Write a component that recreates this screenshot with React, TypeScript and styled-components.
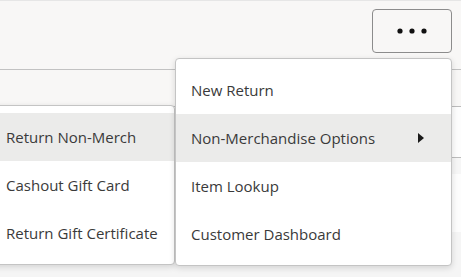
import React from "react";
import styled, { createGlobalStyle } from "styled-components";

const Global = createGlobalStyle`
  html, body { margin: 0; padding: 0; background: #fff; }
  body { font-family: "Open Sans", "Noto Sans", sans-serif; overflow: hidden; }
`;

const Page = styled.div`
  position: relative;
  width: 461px;
  height: 277px;
  overflow: hidden;
  background: #fff;
`;

const Header = styled.header`
  box-sizing: border-box;
  height: 70px;
  border-top: 1px solid #e6e6e6;
  border-bottom: 1px solid #c2c2c2;
  background: #f8f7f6;
  display: flex;
  justify-content: flex-end;
  align-items: flex-start;
  padding: 8px 9px 0 0;
`;

const MoreButton = styled.button`
  box-sizing: border-box;
  width: 80px;
  height: 44px;
  border: 1px solid #8c8c8c;
  border-radius: 4px;
  background: #f8f7f6;
  display: flex;
  align-items: center;
  justify-content: center;
  padding: 0;
  cursor: pointer;
`;

const Band = styled.div<{ $h: number; $bg: string; $line?: boolean }>`
  box-sizing: border-box;
  height: ${(p) => p.$h}px;
  background: ${(p) => p.$bg};
  border-bottom: ${(p) => (p.$line ? "1px solid #bcbcbc" : "none")};
`;

const Menu = styled.ul<{ $left: number; $top: number; $width: number; $z: number }>`
  position: absolute;
  left: ${(p) => p.$left}px;
  top: ${(p) => p.$top}px;
  width: ${(p) => p.$width}px;
  z-index: ${(p) => p.$z};
  box-sizing: border-box;
  margin: 0;
  padding: 7px 0;
  list-style: none;
  background: #fff;
  border: 1px solid #c4c4c4;
  border-radius: 4px;
  box-shadow: 0 2px 6px rgba(0, 0, 0, 0.14);
`;

const Item = styled.li<{ $active?: boolean }>`
  height: 48px;
  display: flex;
  align-items: center;
  justify-content: space-between;
  padding: 0 27px 0 15px;
  background: ${(p) => (p.$active ? "#ebebea" : "transparent")};
  color: #3a3a3a;
  font-size: 15px;
  white-space: nowrap;
`;

const Dots = () => (
  <svg width="32" height="8" viewBox="0 0 32 8">
    <circle cx="4" cy="4" r="2.6" fill="#111" />
    <circle cx="16" cy="4" r="2.6" fill="#111" />
    <circle cx="28" cy="4" r="2.6" fill="#111" />
  </svg>
);

const Caret = () => (
  <svg width="6" height="10" viewBox="0 0 6 10">
    <path d="M0 0 L6 5 L0 10 Z" fill="#1a1a1a" />
  </svg>
);

export default function App() {
  return (
    <Page>
      <Global />
      <Header>
        <MoreButton aria-label="More">
          <Dots />
        </MoreButton>
      </Header>
      <Band $h={37} $bg="#f8f7f6" $line />
      <Band $h={51} $bg="#fdfdfd" $line />
      <Band $h={16} $bg="#f6f6f6" />
      <Band $h={58} $bg="#fdfdfd" />
      <Band $h={45} $bg="#f5f5f5" />

      <Menu $left={-10} $top={105} $width={185} $z={1}>
        <Item $active>Return Non-Merch</Item>
        <Item>Cashout Gift Card</Item>
        <Item>Return Gift Certificate</Item>
      </Menu>
      <Menu $left={175} $top={58} $width={277} $z={2}>
        <Item>New Return</Item>
        <Item $active>
          Non-Merchandise Options
          <Caret />
        </Item>
        <Item>Item Lookup</Item>
        <Item>Customer Dashboard</Item>
      </Menu>
    </Page>
  );
}
